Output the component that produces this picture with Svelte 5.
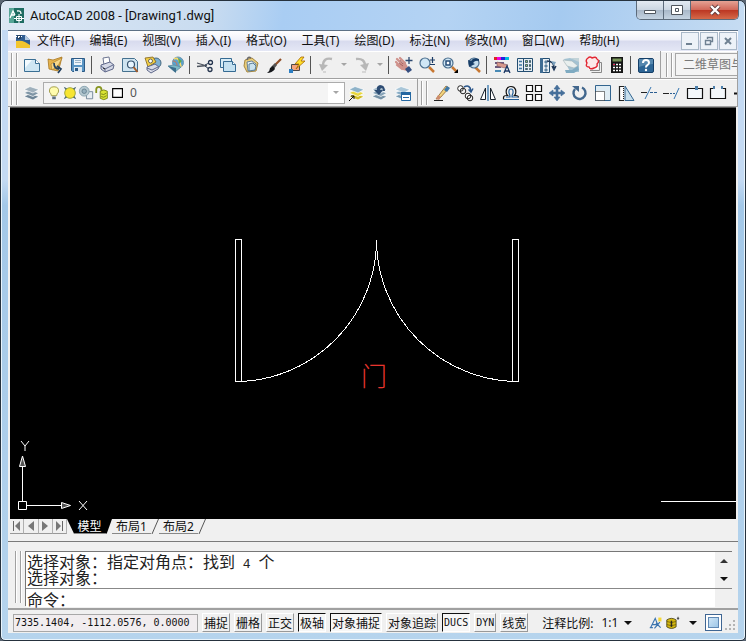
<script lang="ts">
  type Tool = { icon: string; label: string; drop?: boolean } | null;

  const menus = [
    "文件(F)", "编辑(E)", "视图(V)", "插入(I)", "格式(O)", "工具(T)",
    "绘图(D)", "标注(N)", "修改(M)", "窗口(W)", "帮助(H)",
  ];

  // null = separator
  const standardTools: Tool[] = [
    { icon: "new", label: "新建" },
    { icon: "open", label: "打开" },
    { icon: "save", label: "保存" },
    null,
    { icon: "print", label: "打印" },
    { icon: "preview", label: "打印预览" },
    { icon: "publish", label: "发布" },
    { icon: "globe", label: "三维 DWF" },
    null,
    { icon: "cut", label: "剪切" },
    { icon: "copy", label: "复制" },
    { icon: "paste", label: "粘贴" },
    { icon: "brush", label: "特性匹配" },
    { icon: "block", label: "块编辑器" },
    null,
    { icon: "undo", label: "放弃", drop: true },
    { icon: "redo", label: "重做", drop: true },
    null,
    { icon: "pan", label: "实时平移" },
    { icon: "zoomrt", label: "实时缩放" },
    { icon: "zoomwin", label: "窗口缩放" },
    { icon: "zoomprev", label: "缩放上一个" },
    null,
    { icon: "props", label: "特性" },
    { icon: "center", label: "设计中心" },
    { icon: "palette", label: "工具选项板" },
    { icon: "sheets", label: "图纸集管理器" },
    { icon: "markup", label: "标记集管理器" },
    { icon: "calc", label: "快速计算器" },
    null,
    { icon: "help", label: "帮助" },
  ];

  const layerTools: Tool[] = [
    { icon: "laycur", label: "置为当前图层" },
    { icon: "layprev", label: "上一个图层" },
    { icon: "laystate", label: "图层状态管理器" },
  ];

  const modifyTools: Tool[] = [
    { icon: "erase", label: "删除" },
    { icon: "copyobj", label: "复制对象" },
    { icon: "mirror", label: "镜像" },
    { icon: "offset", label: "偏移" },
    { icon: "array", label: "阵列" },
    { icon: "move", label: "移动" },
    { icon: "rotate", label: "旋转" },
    { icon: "scale", label: "缩放" },
    { icon: "stretch", label: "拉伸" },
    { icon: "trim", label: "修剪" },
    { icon: "extend", label: "延伸" },
    { icon: "breakpt", label: "打断于点" },
    { icon: "break", label: "打断" },
    { icon: "join", label: "合并" },
  ];

  const modes = [
    { name: "捕捉", on: false },
    { name: "栅格", on: false },
    { name: "正交", on: false },
    { name: "极轴", on: true },
    { name: "对象捕捉", on: true },
    { name: "对象追踪", on: false },
    { name: "DUCS", on: true, latin: true },
    { name: "DYN", on: false, latin: true },
    { name: "线宽", on: false },
  ];

  const layers = (a: string, b: string, c: string) =>
    `<path d="M1 12.500l6-3 9 3-6 3.500z" fill="${c}" stroke="#fff" stroke-width=".7"/>
     <path d="M1 9l6-3 9 3-6 3.500z" fill="${b}" stroke="#fff" stroke-width=".7"/>
     <path d="M1 5.500l6-3 9 3-6 3.500z" fill="${a}" stroke="#fff" stroke-width=".7"/>`;

  const lens = `<path d="M11 11l5 5" stroke="#c87832" stroke-width="2.500"/><circle cx="7" cy="7" r="5" fill="#cfe6f5" stroke="#4b6f8f" stroke-width="1.200"/>`;

  const icons: Record<string, string> = {
    new: `<path d="M1.500 3.500h11l4 4v8h-15z" fill="#cfe6f3" stroke="#3a6f94"/><path d="M2 4h7l-7 8z" fill="#f4fbff"/><path d="M12.500 3.500v4h4" fill="#fff" stroke="#3a6f94"/>`,
    open: `<path d="M2 3l5 1 9-3-2 8-2 6-9-2z" fill="#e5b34d" stroke="#a8761f" stroke-width=".8"/><path d="M5 8l5-3 6-3-4 8-6 4z" fill="#f6d88b" stroke="#a8761f" stroke-width=".6"/><path d="M8 7q0 6 5 6M11 10l4 3-3 4" fill="none" stroke="#22405e" stroke-width="1.700"/>`,
    save: `<path d="M2.500 2.500h13v13h-12l-1-1z" fill="#5a95c4" stroke="#2c5a86"/><path d="M5 3h8v6H5z" fill="#eef5fa"/><path d="M6 4.500h6M6 6.500h6" stroke="#9cb4c8"/><path d="M5 11h8v5H5z" fill="#dfe9f1"/><path d="M6 12h3v3H6z" fill="#2c5a86"/>`,
    print: `<path d="M5 2l6-1 1 6-6 2z" fill="#fff" stroke="#6c7591"/><path d="M3 9l9-3 4 3-1 4-8 3-4-3z" fill="#d4d8e6" stroke="#5f688a"/><path d="M3 10l4 3 8-4M7 13v3" fill="none" stroke="#5f688a"/><path d="M5 12l2 1" stroke="#222"/>`,
    preview: `<path d="M1.500 2.500h12l3 3v10h-15z" fill="#cfe4f0" stroke="#45718f"/><circle cx="10" cy="8.500" r="3.500" fill="#e8f6ff" stroke="#38546f" stroke-width="1.200"/><path d="M12.500 11l4 5" stroke="#a55c29" stroke-width="2"/>`,
    publish: `<circle cx="12" cy="7" r="5" fill="#7fb0d1" stroke="#47687f"/><path d="M1 2l8-1 3 5-8 5z" fill="#f4cf45" stroke="#80631c" stroke-width=".8"/><circle cx="6.500" cy="5" r="2" fill="#fff" stroke="#665"/><path d="M3 11l8-3 4 3-1 2-7 4-4-3z" fill="#d9dce8" stroke="#5f688a"/><path d="M3 12l5 2 6-3" fill="none" stroke="#5f688a"/>`,
    globe: `<circle cx="11" cy="6.500" r="5.500" fill="#5aa3cf" stroke="#6f97ae"/><path d="M7 3q5-3 7 8" stroke="#f4d76b" fill="none" stroke-width="1.700"/><path d="M11 2l4 3-3 3z" fill="#61a851"/><path d="M6 5q4 0 4 5" stroke="#cf7454" fill="none"/><path d="M1 10l6-1 7 2-6 5z" fill="#7dbac8" stroke="#5d8ba1" stroke-width=".8"/><path d="M1 10l8 2v5z" fill="#3b6e8c"/>`,
    cut: `<path d="M1 7l10 3M1 10.500l10-1" stroke="#4e5560" stroke-width="1.300"/><path d="M9 9l4-2M9 10l4 3" stroke="#26364f"/><circle cx="14.500" cy="6.500" r="2" fill="none" stroke="#26364f" stroke-width="1.300"/><circle cx="14" cy="13.500" r="2" fill="none" stroke="#26364f" stroke-width="1.300"/>`,
    copy: `<path d="M1.500 2.500h11v9h-11z" fill="#d9edf7" stroke="#356b93"/><path d="M4.500 5.500h9l3 3v7h-12z" fill="#c4e1f1" stroke="#356b93"/><path d="M13.500 5.500v3h3" fill="#fff" stroke="#356b93"/>`,
    paste: `<path d="M3 4l7-2 6 5-2 8-9 1-3-6z" fill="#e9cd7a" stroke="#a58640"/><path d="M5 6l5-1 4 3-1 6-7 1z" fill="#eef5f9" stroke="#668096"/><path d="M7 8l4-1 3 3-1 4-6 1z" fill="#c9e2ef" stroke="#5b7f97"/><path d="M5 4q1-4 4-2" stroke="#6b6b6b" stroke-width="1.500" fill="none"/>`,
    brush: `<path d="M16 3l-8 8" stroke="#8f4f28" stroke-width="2.200"/><path d="M10 7l2 2-3 4-3-2z" fill="#555"/><path d="M8 10l2 3q-3 4-8 4 3-2 3-5z" fill="#15171b"/>`,
    block: `<path d="M3.500 8.500h8v6h-8z" fill="#f3a27c" stroke="#4a4a4a"/><path d="M1 13h4v4H1z" fill="#2d7fc3"/><path d="M13 1L7 8h4l-3 5 9-8h-4l3-4z" fill="#ffe02b" stroke="#a86600" stroke-width=".8"/>`,
    undo: `<path d="M15 3Q6 1 6 10" fill="none" stroke="#b7b7b7" stroke-width="2.400"/><path d="M2 8l3 7 6-6z" fill="#b7b7b7"/><path d="M6 16h3" stroke="#bbb"/>`,
    redo: `<path d="M3 3q9-1 9 7" fill="none" stroke="#b7b7b7" stroke-width="2.400"/><path d="M16 7l-3 8-6-6z" fill="#b7b7b7"/><path d="M9 16h4" stroke="#bbb"/>`,
    pan: `<path d="M2 3l5 5M1 6l5 5M2 9l5 4M5 2l5 5" stroke="#cf918b" stroke-width="2.200" stroke-linecap="round"/><path d="M5 7l5-1 3 5-1 4-4-1-4-4z" fill="#cf918b"/><path d="M10 13l4-3 3 4-4 3z" fill="#344e80"/><path d="M14 1v7M10.500 4.500h7" stroke="#2d4970" stroke-width="1.300"/><path d="M5 4l3 4M4 7l4 3" stroke="#904e50" stroke-width=".7"/>`,
    zoomrt: lens + `<path d="M14.500 1v6M12 4h5M12 8.500h5" stroke="#1c3c66" stroke-width="1.200"/>`,
    zoomwin: lens + `<path d="M5 5h4v4H5z" fill="#fff" stroke="#284d78" stroke-width="1.500"/><path d="M17 13v4h-4z" fill="#000"/>`,
    zoomprev: `<path d="M11 11l5 5" stroke="#c87832" stroke-width="2.500"/><circle cx="10" cy="7" r="5" fill="#c5dded" stroke="#4b6f8f" stroke-width="1.200"/><path d="M15 3Q9 1 7 5L4 4l1 7 6-3-2-1q2-3 6-2z" fill="#183e68"/>`,
    props: `<path d="M1 1h3v3H1z" fill="#d22"/><path d="M4 1h4v3H4z" fill="#e0d"/><path d="M8 1h4v3H8z" fill="#22d"/><path d="M12 1h4v3h-4z" fill="#0bd"/><path d="M2 6h9v2H2zM2 10h6v2H2z" fill="#6b5a80"/><path d="M4 6l11 3-3 3-8-2z" fill="#d9998d" stroke="#81565a" stroke-width=".6"/><path d="M11 17l3-7 3 7M12 15h4" fill="none" stroke="#1c3965" stroke-width="1.300"/><path d="M2 14h6v2H2z" fill="#488ab5"/>`,
    center: `<path d="M1.500 2.500h15v13h-15z" fill="#e6eef3" stroke="#244e72"/><path d="M7.500 3v13" stroke="#244e72"/><path d="M3 5.500h3M3 9h3M3 12.500h3" stroke="#3c75a2" stroke-width="1.600"/><path d="M9.500 4.500h2v2h-2zM13.500 4.500h1v2h-1zM9.500 8.500h2v2h-2zM13.500 8.500h1v2h-1zM9.500 12.500h2v1h-2zM13.500 12.500h1v1h-1z" fill="#a6d16d" stroke="#24425f" stroke-width=".8"/>`,
    palette: `<path d="M2.500 2.500h8v14h-8z" fill="#e8eff5" stroke="#244e72"/><path d="M1 2h3v15H1z" fill="#3f6c93"/><path d="M6 5h2v2H6zM6 9h2v2H6zM6 13h2v2H6z" fill="#adcde1" stroke="#244e72" stroke-width=".7"/><path d="M8 5q7 0 7 7M13 10l2 4 2-4" fill="none" stroke="#1e3657" stroke-width="1.400"/><path d="M12 5l5 1-2 4z" fill="#7ca1bd"/>`,
    sheets: `<path d="M2 3l6-1 9 2v12H8z" fill="#a3c2d2"/><path d="M1 4l9 1 6 5-4 2-7-2z" fill="#e9efee" stroke="#9fb0b5" stroke-width=".6"/><path d="M3 14l7 0 6-4 1 4-5 3H4z" fill="#7fabc2"/><path d="M8 2h9v4z" fill="#c3d3d8"/>`,
    markup: `<path d="M7.500 6.500h9v10h-10M14.500 4v10.500H5" fill="none" stroke="#888"/><path d="M3 3h10v10H3z" fill="#fff"/><path d="M3 2q2-2 4 0 4-2 5 1 3 2 0 5 1 3-3 4-4 2-5-1-4 0-2-4-2-3 1-5z" fill="#fbe9e9" stroke="#e22733" stroke-width="1.400"/>`,
    calc: `<path d="M3 1h12v16H3z" fill="#151515"/><path d="M4.500 2.500h9v3h-9z" fill="#79965a"/><path d="M5 8.500h8M5 11.500h8M5 14.500h8" stroke="#fff" stroke-width="1.600" stroke-dasharray="2 1"/><path d="M5 8.500h2" stroke="#e25"/>`,
    help: `<rect x="1.500" y="2.500" width="15" height="14" rx="1.500" fill="#2d6595" stroke="#153f68"/><path d="M2 3h14v5q-7 0-14 3z" fill="#5688af"/><path d="M6 7q0-3 3-3t3 3q0 1-2 2.500-1 .500-1 2" fill="none" stroke="#fff" stroke-width="2"/><circle cx="9" cy="14" r="1.200" fill="#fff"/>`,
    layers: layers("#9fb0bc", "#8096a6", "#6d8496"),
    laycur: layers("#8fb3c9", "#e8d73c", "#d1bc25") + `<path d="M1 17l5-5M3 12h3v3" stroke="#111" fill="none"/>`,
    layprev: layers("#a9bfce", "#87a3b7", "#7692a6") + `<path d="M14 7Q14 1 9 1 5 2 6 6H3l5 5 4-5h-3q0-2 2-2 1 1 1 3z" fill="#2d4c73"/>`,
    laystate: layers("#a9c6d8", "#87abc4", "#7699b0") + `<path d="M7.500 8.500h9v8h-9z" fill="#fff" stroke="#2468a2"/><path d="M7 8h10v3H7z" fill="#2468a2"/><path d="M9 13.500h6" stroke="#2468a2"/>`,
    erase: `<path d="M1 16.500h9" stroke="#222"/><path d="M13 2l3 2-9 10-4 1z" fill="#f1d37e" stroke="#8c6229" stroke-width=".8"/><path d="M14 2l3 2-3 4-3-2z" fill="#3f78a8"/><path d="M5 11l3 2-2 3-3-1z" fill="#ce8c6d"/>`,
    copyobj: `<circle cx="4.500" cy="4.500" r="2.800" fill="#fff" stroke="#222"/><circle cx="7" cy="7" r="2.800" fill="none" stroke="#222"/><circle cx="12" cy="12" r="2.800" fill="#fff" stroke="#222"/><circle cx="14" cy="14" r="2.800" fill="none" stroke="#222"/><path d="M8 3q6-3 7 4M12.500 5.500l2.500 2.500 2-3.500" fill="none" stroke="#2a568a" stroke-width="1.500"/>`,
    mirror: `<path d="M6.500 4v11.500H1.500zM11.500 4v11.500h5z" fill="#fff" stroke="#17202a"/><path d="M9 1v16" stroke="#246ba7" stroke-width="1.200"/>`,
    offset: `<path d="M1.500 15.500v-2q0-2 3-2h1q-2-2-1-6 1-3 4.500-3t4.500 3q1 4-1 6h1q3 0 3 2" fill="none" stroke="#111" stroke-width="1.200"/><path d="M2 15.500h15M4 13h4q0-2-1-4-.500-4 2-4t2 4q-1 2-1 4h6" fill="none" stroke="#225d95" stroke-width="1.200"/>`,
    array: `<path d="M1.500 1.500h6v6h-6zM10.500 1.500h6v6h-6zM1.500 10.500h6v6h-6zM10.500 10.500h6v6h-6z" fill="#fff" stroke="#111" stroke-width="1.200"/>`,
    move: `<path d="M9 1l3 4h-2v3h3V6l4 3-4 3v-2h-3v3h2l-3 4-3-4h2v-3H5v2L1 9l4-3v2h3V5H6z" fill="#466f9a" stroke="#466f9a" stroke-width=".6"/>`,
    rotate: `<path d="M11 3.500A6 6 0 1 1 4 5" fill="none" stroke="#42678d" stroke-width="2.400"/><path d="M1 2h7v6z" fill="#42678d"/>`,
    scale: `<path d="M1.500 1.500h15v15h-15z" fill="#dfecf4" stroke="#33658f"/><path d="M1.500 7.500h9v9h-9z" fill="#fff" stroke="#111" stroke-dasharray="1 1"/>`,
    stretch: `<path d="M8 2l9 14.500H8z" fill="#c8dfed" stroke="#33658f"/><path d="M6 2.500H2.500v14H6" fill="#fff" stroke="#222" stroke-width="1.200"/><path d="M6.500 2v15" stroke="#222" stroke-dasharray="1 1"/>`,
    trim: `<path d="M1 8.500h6" stroke="#222"/><path d="M10 8.500h8" stroke="#2b5d91" stroke-dasharray="3 1"/><path d="M11 3L5 15" stroke="#3575b0"/>`,
    extend: `<path d="M0 9.500h6" stroke="#222"/><path d="M7 9.500h5" stroke="#2b5d91" stroke-dasharray="2 1"/><path d="M16 4l-5 11" stroke="#3575b0"/>`,
    breakpt: `<path d="M1.500 4.500h15v10h-15z" fill="#f4f8fb" stroke="#111" stroke-width="1.200"/><path d="M9 2h3v4H9z" fill="#4c7fab"/>`,
    break: `<path d="M4 4.500H1.500v10h15v-10H14" fill="#f4f8fb" stroke="#111" stroke-width="1.200"/><path d="M4 2h2v3H4zM12 2h2v3h-2z" fill="#4c7fab"/>`,
    join: `<path d="M2 9.500h7" stroke="#111" stroke-width="2"/><path d="M5 6l5 3.500L5 13z" fill="#111"/>`,
    bulb: `<path d="M6 12q0-2-2-4-1-6 5-6t5 6q-2 2-2 4z" fill="#fffcae" stroke="#9b9640"/><path d="M7 13h4v3H7z" fill="#5f7184"/>`,
    sun: `<path d="M2 2l4 2-2 2zM16 2l-4 2 2 2zM2 16l4-2-2-2zM16 16l-4-2 2-2z" fill="#4e6a72"/><circle cx="9" cy="9" r="6" fill="#f7e531" stroke="#9aa02e"/>`,
    vpsun: `<path d="M9.500 7.500h7v8h-7z" fill="#e7edf2" stroke="#6d8294"/><circle cx="7" cy="7" r="5.500" fill="#b5c8d0" stroke="#84a0ad"/><circle cx="7" cy="7" r="2.500" fill="#97b1bf" stroke="#64818f"/>`,
    lock: `<path d="M2.500 9V5q0-3 3-3t3 4v3" fill="none" stroke="#879520" stroke-width="2"/><path d="M7 7q4-3 8 0v8q-4 3-8 0z" fill="#d9e332" stroke="#778318"/><path d="M8 10q3 2 6-1M8 13q3 2 6-1" fill="none" stroke="#778318"/>`,
    swatch: `<path d="M3 4h11v10H3z" fill="#fff" stroke="#000" stroke-width="1.300"/>`,
    annovis: `<path d="M2 15L8 3l3 8M4 11h7M1 15h4M9 9l6 6M14 8L7 16" stroke="#3c75ae" fill="none" stroke-width="1.500"/><path d="M12 2h4v5h-4z" fill="#f5d937"/>`,
    annoauto: `<path d="M1 5q6-4 12 0v9q-6 4-12 0z" fill="#d6b90e" stroke="#3e3912"/><path d="M1 7q6 3 12 0M1 11q6 3 12 0" fill="none" stroke="#69590c"/><path d="M6 6h2v8H6z" fill="#2b2b1d"/><path d="M14 3h3M15.500 1v4" stroke="#222"/>`,
  };
</script>

{#snippet icon(name: string)}
  <svg class="icon" viewBox="0 0 18 18" aria-hidden="true">{@html icons[name]}</svg>
{/snippet}

{#snippet toolRow(tools: Tool[])}
  {#each tools as tool}
    {#if tool}
      <button class="tool" aria-label={tool.label}>{@render icon(tool.icon)}</button>
      {#if tool.drop}
        <button class="tool-drop" aria-label="{tool.label}列表"><i class="caret caret--dim"></i></button>
      {/if}
    {:else}
      <span class="tool-sep"></span>
    {/if}
  {/each}
{/snippet}

<div class="window">
  <header class="title">
    <svg class="title__logo" viewBox="0 0 16 16" aria-hidden="true">
      <path d="M0 0h15v15H0z" fill="#1d6c62" />
      <path d="M0 0h5v15H0z" fill="#56a596" />
      <path d="M1 10l3-7 2 4M2 7h4M8 3q4-1 4 3" fill="none" stroke="#fff" stroke-width="1.300" />
      <path d="M7.500 8.500h5v4h-5zM10 6v9M5 10.500h10" fill="none" stroke="#fff" />
    </svg>
    <h1>AutoCAD 2008 - [Drawing1.dwg]</h1>
    <div class="caption">
      <button class="caption__btn" aria-label="最小化">
        <svg viewBox="0 0 14 12"><path d="M1.500 6.500h11v3h-11z" fill="#fff" stroke="#50565e" /></svg>
      </button>
      <button class="caption__btn" aria-label="最大化">
        <svg viewBox="0 0 14 12"><path d="M1.500 1.500h11v9h-11z M5.500 4.500h3v3h-3z" fill="#fff" stroke="#50565e" /></svg>
      </button>
      <button class="caption__btn caption__btn--close" aria-label="关闭">
        <svg viewBox="0 0 14 12">
          <path d="M3 2l8 8M11 2l-8 8" stroke="#5b3a3a" stroke-width="4" />
          <path d="M3 2l8 8M11 2l-8 8" stroke="#fff" stroke-width="2.400" />
        </svg>
      </button>
    </div>
  </header>

  <div class="client">
    <nav class="menubar">
      <svg class="menubar__doc" viewBox="0 0 16 16" aria-hidden="true">
        <path d="M1 2h9l5 5v8H1z" fill="#325f93" />
        <path d="M1 8q5-1 9 1l5 3v3H1z" fill="#f3c52e" />
        <path d="M10 2v5h5z" fill="#b5cbe2" />
        <path d="M3.500 0v6M0 3.500h7" stroke="#fff" />
        <path d="M2.500 2.500h3v3h-3z" fill="none" stroke="#26405f" />
      </svg>
      {#each menus as menu}
        <button class="menubar__item">{menu}</button>
      {/each}
      <div class="mdi">
        <button aria-label="最小化图形"><svg viewBox="0 0 12 12"><path d="M2 9h6" stroke="#6f8192" stroke-width="2" /></svg></button>
        <button aria-label="还原图形"><svg viewBox="0 0 12 12"><path d="M4.500 4V2.500h5v4H8M2.500 5.500h5v4h-5z" fill="none" stroke="#6f8192" stroke-width="1.400" /></svg></button>
        <button aria-label="关闭图形"><svg viewBox="0 0 12 12"><path d="M3 3l6 6M9 3L3 9" stroke="#6f8192" stroke-width="2" /></svg></button>
      </div>
    </nav>

    <div class="toolbar">
      <div class="strip">
        <span class="grip"></span>
        {@render toolRow(standardTools)}
      </div>
      <div class="strip strip--workspace">
        <span class="grip"></span>
        <select class="workspace" aria-label="工作空间"><option>二维草图与注释</option></select>
      </div>
    </div>

    <div class="toolbar">
      <div class="strip strip--grow">
        <span class="grip"></span>
        <button class="tool" aria-label="图层特性管理器">{@render icon("layers")}</button>
        <div class="layer">
          <span class="layer__icons">
            {#each ["bulb", "sun", "vpsun", "lock", "swatch"] as name}{@render icon(name)}{/each}
          </span>
          <select aria-label="图层"><option>0</option></select>
          <span class="layer__arrow"><i class="caret caret--dim"></i></span>
        </div>
        {@render toolRow(layerTools)}
      </div>
      <div class="strip strip--modify">
        <span class="grip"></span>
        {@render toolRow(modifyTools)}
      </div>
    </div>

    <main class="canvas">
      <svg class="drawing" shape-rendering="crispEdges">
        <g fill="none" stroke="#fff">
          <rect x="225.500" y="131.500" width="6" height="142" />
          <rect x="502.500" y="131.500" width="6" height="142" />
          <path d="M366.500 131.500A141 142 0 0 1 225.500 273.500" />
          <path d="M366.500 131.500A142 142 0 0 0 508.500 273.500" />
        </g>
        <text x="351" y="278">门</text>
      </svg>
      <svg class="ucs" viewBox="0 0 84 76">
        <g fill="none" stroke="#fff">
          <path d="M4.500 58.500h8v8h-8zM8.500 58V14M13 62.500h34" />
          <path d="M5.500 23.500h6L8.500 13zM47.500 59.500v6l9-3z" fill="#555" />
          <path d="M7 -2l4 5 4-5M11 3v5M65 58l8 9M73 58l-8 9" />
        </g>
      </svg>
      <span class="edge-line"></span>
    </main>

    <div class="tabs">
      <div class="tabs__nav">
        <button aria-label="第一个"><svg viewBox="0 0 12 12"><path d="M2.500 1v10" stroke="#666" /><path d="M9 1v10L4 6z" fill="#777" /></svg></button>
        <button aria-label="上一个"><svg viewBox="0 0 12 12"><path d="M9 1v10L3 6z" fill="#777" /></svg></button>
        <button aria-label="下一个"><svg viewBox="0 0 12 12"><path d="M3 1v10l6-5z" fill="#777" /></svg></button>
        <button aria-label="最后一个"><svg viewBox="0 0 12 12"><path d="M9.500 1v10" stroke="#666" /><path d="M3 1v10l5-5z" fill="#777" /></svg></button>
      </div>
      <button class="tab tab--active">模型</button>
      <button class="tab">布局1</button>
      <svg class="slash" viewBox="0 0 8 15"><path d="M7.500 0L1 15" stroke="#555" /></svg>
      <button class="tab">布局2</button>
      <svg class="slash" viewBox="0 0 8 15"><path d="M7.500 0L1 15" stroke="#555" /></svg>
    </div>

    <section class="command">
      <span class="grip"></span>
      <div class="command__box">
        <div class="command__history">
          <div class="command__log" role="log">
            <p>选择对象：指定对角点：找到<span class="half">&nbsp;4&nbsp;</span>个</p>
            <p>选择对象：</p>
          </div>
          <div class="command__scroll">
            <button aria-label="向上滚动"><i class="caret caret--up"></i></button>
            <button aria-label="向下滚动"><i class="caret"></i></button>
          </div>
        </div>
        <div class="command__line">
          <label for="cmd">命令：</label>
          <input id="cmd" type="text" />
        </div>
      </div>
    </section>

    <footer class="status">
      <output class="coords">7335.1404, -1112.0576, 0.0000</output>
      {#each modes as mode}
        <button class="mode" class:mode--on={mode.on} class:mode--latin={mode.latin} aria-pressed={mode.on}>{mode.name}</button>
      {/each}
      <span class="scale-label">注释比例:</span>
      <button class="scale">1:1<i class="caret"></i></button>
      <div class="tray">
        <button class="tray__btn" aria-label="注释可见性">{@render icon("annovis")}</button>
        <button class="tray__btn" aria-label="自动添加比例">{@render icon("annoauto")}</button>
        <button class="tray__menu" aria-label="状态栏菜单"><i class="caret"></i></button>
        <button class="clean" aria-label="全屏显示"></button>
        <svg class="resize" viewBox="0 0 10 10" aria-hidden="true">
          <path d="M8 0h2v2H8zM4 4h2v2H4zM8 4h2v2H8zM0 8h2v2H0zM4 8h2v2H4zM8 8h2v2H8z" fill="#b4b4b4" />
        </svg>
      </div>
    </footer>
  </div>
</div>

<style>
  :global(body) {
    margin: 0;
    background: #5b6673;
  }

  button,
  select,
  input {
    margin: 0;
    padding: 0;
    border: 0;
    background: none;
    color: inherit;
    font: inherit;
  }

  .window {
    display: flex;
    flex-direction: column;
    box-sizing: border-box;
    width: 100%;
    height: 100vh;
    padding: 0 7px 7px;
    overflow: hidden;
    border: 1px solid #26323e;
    border-radius: 7px 7px 5px 5px;
    background: linear-gradient(#c4daf3 0, #c4daf3 28%, #a3c8e8 32%, #b6d4ed 100%);
    box-shadow: inset 0 0 0 1px #e9f4fc;
    font-family: "Noto Sans", "Noto Sans CJK SC", sans-serif;
    font-size: 12px;
    color: #111;
  }

  .title {
    display: flex;
    align-items: center;
    flex: none;
    height: 29px;
    margin: 0 -6px;
    padding-left: 7px;
    background: linear-gradient(100deg, #dce7f3 0, #c9dcf0 28%, #a9cdf3 38%, #b4d3f3 60%, #a5caf0 75%, #c6dcf2 100%);
  }

  .title__logo {
    width: 16px;
    height: 16px;
  }

  .title h1 {
    flex: 1;
    margin: 0 0 0 5px;
    font-family: Roboto, sans-serif;
    font-size: 13px;
    font-weight: 400;
  }

  .caption {
    display: flex;
    align-self: flex-start;
    height: 18px;
    margin-right: 5px;
    border: 1px solid #5c6a7a;
    border-top: 0;
    border-radius: 0 0 5px 5px;
    overflow: hidden;
  }

  .caption__btn {
    display: flex;
    align-items: center;
    justify-content: center;
    width: 27px;
    border-right: 1px solid #5c6a7a;
    background: linear-gradient(#e3eaf2 0, #cbd6e2 48%, #a8b7c8 50%, #c5d3e1 100%);
  }

  .caption__btn svg {
    width: 14px;
    height: 12px;
  }

  .caption__btn--close {
    width: 47px;
    border-right: 0;
    background: linear-gradient(#e5a294 0, #d2695a 48%, #bb3521 50%, #d56a4a 100%);
  }

  .client {
    display: flex;
    flex: 1;
    flex-direction: column;
    min-height: 0;
    border-top: 1px solid #5d7186;
    background: #f0f0f0;
    overflow: hidden;
  }

  .menubar {
    display: flex;
    align-items: center;
    flex: none;
    height: 20px;
    padding: 0 1px 0 7px;
    background: linear-gradient(#fff 0, #f0f1f9 45%, #d8dbee 50%, #e4e7f5 100%);
  }

  .menubar__doc {
    width: 16px;
    height: 16px;
    margin-right: 6px;
  }

  .menubar__item {
    margin-right: 15px;
    line-height: 18px;
    white-space: nowrap;
  }

  .mdi {
    display: flex;
    gap: 1px;
    margin-left: auto;
  }

  .mdi button {
    display: flex;
    align-items: center;
    justify-content: center;
    box-sizing: border-box;
    width: 18px;
    height: 18px;
    border: 1px solid #a9b8c8;
    background: #edf2f8;
  }

  .mdi svg {
    width: 12px;
    height: 12px;
  }

  .toolbar {
    display: flex;
    flex: none;
    height: 28px;
    overflow: hidden;
    background: #f0f0f0;
  }

  .strip {
    display: flex;
    align-items: center;
    flex: none;
    box-sizing: border-box;
    padding: 0 3px;
    border-right: 1px solid #a0a0a0;
    border-bottom: 1px solid #a0a0a0;
    box-shadow: inset 0 1px #fff;
  }

  .strip--workspace {
    flex: 1;
    min-width: 0;
    padding-left: 5px;
    overflow: hidden;
  }

  .strip--grow {
    width: 410px;
  }

  .strip--modify {
    flex: 1;
    min-width: 0;
    overflow: hidden;
  }

  .grip {
    flex: none;
    box-sizing: border-box;
    width: 6px;
    height: 24px;
    margin-right: 3px;
    border: 1px solid #a0a0a0;
    border-width: 0 1px;
    box-shadow: inset 1px 0 #fff, 1px 0 #fff;
  }

  .icon {
    display: block;
    flex: none;
    width: 18px;
    height: 18px;
  }

  .tool {
    display: flex;
    align-items: center;
    justify-content: center;
    flex: none;
    width: 23px;
    height: 24px;
  }

  .tool-drop {
    display: flex;
    justify-content: center;
    flex: none;
    width: 13px;
  }

  .tool-sep {
    flex: none;
    width: 1px;
    height: 18px;
    margin: 0 3px 0 2px;
    background: #555;
  }

  .caret {
    display: block;
    width: 0;
    height: 0;
    border: 4px solid transparent;
    border-top-color: #111;
    border-bottom: 0;
  }

  .caret--up {
    border-top: 0;
    border-bottom: 4px solid #333;
  }

  .caret--dim {
    border-width: 3px 3px 0;
    border-top-color: #a5a5a5;
  }

  .workspace {
    flex: none;
    width: 160px;
    height: 23px;
    padding-left: 7px;
    appearance: none;
    border: 1px solid #a7a7a7;
    background: #f4f4f4;
    color: #777;
  }

  .layer {
    display: flex;
    align-items: center;
    flex: 1;
    box-sizing: border-box;
    height: 22px;
    border: 1px solid #acacac;
    background: #f4f4f4;
  }

  .layer__icons {
    display: flex;
    padding-left: 2px;
  }

  .layer__icons .icon {
    width: 16px;
    height: 16px;
  }

  .layer select {
    flex: 1;
    padding-left: 4px;
    appearance: none;
    color: #555;
    font-size: 12px;
  }

  .layer__arrow {
    display: flex;
    align-items: center;
    justify-content: center;
    width: 16px;
    height: 20px;
    background: #fff;
  }

  .canvas {
    position: relative;
    flex: 1;
    min-height: 0;
    margin: 0 2px;
    border-top: 1px solid #555;
    background: #000;
    overflow: hidden;
  }

  .drawing {
    display: block;
    width: 100%;
    height: 100%;
  }

  .drawing text {
    fill: #e8352e;
    font-family: "Noto Sans CJK SC", sans-serif;
    font-size: 26px;
    font-weight: 300;
  }

  .ucs {
    position: absolute;
    left: 4px;
    bottom: 0;
    width: 84px;
    height: 76px;
    overflow: visible;
  }

  .edge-line {
    position: absolute;
    right: 0;
    bottom: 17px;
    width: 75px;
    height: 1px;
    background: #fff;
  }

  .tabs {
    display: flex;
    flex: none;
    height: 15px;
    margin: 0 2px;
    padding-bottom: 7px;
    background: #f0f0f0;
  }

  .tabs__nav {
    display: flex;
    width: 57px;
  }

  .tabs__nav button {
    display: flex;
    align-items: center;
    justify-content: center;
    flex: 1;
    border-right: 1px solid #b0b0b0;
    border-bottom: 1px solid #999;
  }

  .tabs__nav svg {
    width: 12px;
    height: 12px;
  }

  .tab {
    flex: none;
    padding: 0 4px;
    border-bottom: 1px solid #888;
    line-height: 16px;
  }

  .tab--active {
    width: 45px;
    padding: 0;
    background: #000;
    color: #fff;
    clip-path: polygon(0 0, 100% 0, 88% 100%, 16% 100%);
  }

  .slash {
    width: 8px;
    height: 15px;
  }

  .command {
    display: flex;
    flex: none;
    height: 55px;
    padding: 9px 6px 2px 7px;
    border-top: 1px solid #7a7a7a;
    border-bottom: 1px solid #a0a0a0;
    background: #f0f0f0;
  }

  .command .grip {
    height: 52px;
    margin-right: 4px;
  }

  .command__box {
    display: flex;
    flex: 1;
    flex-direction: column;
    border: 1px solid #777;
    border-width: 1px 0 0 1px;
    font-family: "Noto Sans CJK SC", sans-serif;
    font-size: 16px;
    line-height: 16px;
    color: #222;
  }

  .command__history {
    display: flex;
    flex: none;
    height: 36px;
    border-bottom: 1px solid #888;
    background: #fff;
  }

  .command__log {
    flex: 1;
    padding: 1px 0 0 1px;
  }

  .command__log p {
    height: 16px;
    margin: 0;
  }

  .half {
    font-family: "Liberation Mono", monospace;
    font-size: 13px;
    line-height: 0;
  }

  .command__scroll {
    display: flex;
    flex-direction: column;
    width: 17px;
    background: #f0f0f0;
  }

  .command__scroll button {
    display: flex;
    align-items: center;
    justify-content: center;
    flex: 1;
  }

  .command__line {
    display: flex;
    align-items: center;
    flex: 1;
    margin-right: 17px;
    padding: 2px 0 0 1px;
    background: #fff;
  }

  .command__line input {
    flex: 1;
    min-width: 0;
    height: 16px;
    outline: 0;
  }

  .status {
    display: flex;
    align-items: center;
    flex: none;
    gap: 4px;
    height: 21px;
    padding: 2px 3px 0 5px;
    border-top: 1px solid #a0a0a0;
    background: #f0f0f0;
    white-space: nowrap;
  }

  .coords {
    box-sizing: border-box;
    width: 185px;
    height: 18px;
    padding-left: 1px;
    border: 1px solid #a8a8a8;
    background: #f1edef;
    font-family: "DejaVu Sans Mono", monospace;
    font-size: 10px;
    line-height: 16px;
  }

  .mode {
    box-sizing: border-box;
    height: 19px;
    padding: 0 1px;
    border: 1px solid #fff;
    border-right-color: #999;
    border-bottom-color: #999;
    font-family: "Noto Sans CJK SC", sans-serif;
    font-size: 12px;
    line-height: 17px;
  }

  .mode--on {
    border-color: #111 #fff #fff #111;
    background: #f6f6f6;
  }

  .mode--latin {
    font-family: "DejaVu Sans Mono", monospace;
    font-size: 10px;
  }

  .scale-label {
    margin-left: 10px;
  }

  .scale {
    display: flex;
    align-items: center;
    gap: 6px;
    margin-left: 4px;
  }

  .tray {
    display: flex;
    align-items: center;
    flex: 1;
    justify-content: flex-end;
  }

  .tray__btn,
  .tray__menu {
    display: flex;
    align-items: center;
    justify-content: center;
    width: 17px;
    height: 18px;
  }

  .tray__menu {
    width: 24px;
  }

  .tray__btn .icon {
    width: 14px;
    height: 14px;
  }

  .clean {
    width: 17px;
    height: 17px;
    margin-right: 3px;
    border: 1px solid #3f6693;
    background: linear-gradient(135deg, #dff0fc, #8ebce2);
    box-shadow: inset 0 0 0 2px #fff, inset 0 0 0 3px #5f88b4;
  }

  .resize {
    align-self: flex-end;
    width: 10px;
    height: 10px;
    margin-bottom: 2px;
  }
</style>
